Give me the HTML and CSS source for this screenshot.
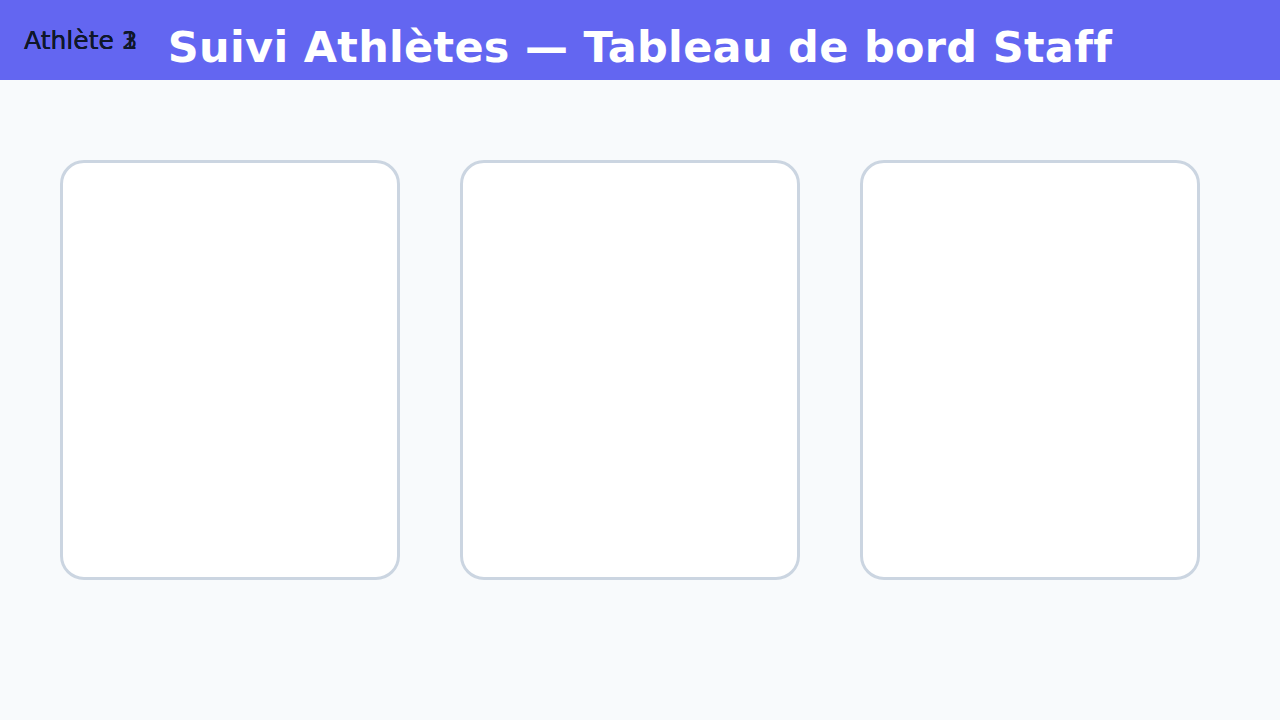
FILE: index.html
```html
<!DOCTYPE html>
<html lang="fr">
<head>
<meta charset="utf-8">
<title>Suivi Athlètes</title>
<link rel="stylesheet" href="styles.css">
</head>
<body>
<header class="topbar">
  <div class="labels">
    <span class="label">Athlète 1</span>
    <span class="label">Athlète 2</span>
    <span class="label">Athlète 3</span>
  </div>
  <h1 class="title">Suivi Athlètes — Tableau de bord Staff</h1>
</header>
<main class="board">
  <section class="card"></section>
  <section class="card"></section>
  <section class="card"></section>
</main>
</body>
</html>
```
FILE: styles.css
```css
* { box-sizing: border-box; }
html, body {
  margin: 0;
  padding: 0;
  background: #f8fafc;
  font-family: "DejaVu Sans", sans-serif;
  font-variant-ligatures: none;
  width: 1280px;
  height: 720px;
  overflow: hidden;
}
.topbar {
  position: relative;
  height: 80px;
  background: #6366f1;
  display: flex;
  justify-content: center;
  align-items: flex-start;
  padding-top: 22px;
}
.labels {
  position: absolute;
  left: 24px;
  top: 26px;
}
.label {
  position: absolute;
  left: 0;
  top: 0;
  white-space: nowrap;
  font-size: 25px;
  color: #0f172a;
}
.title {
  margin: 0;
  font-size: 43px;
  letter-spacing: 0.3px;
  font-weight: bold;
  color: #ffffff;
  line-height: normal;
}
.board {
  display: flex;
  gap: 60px;
  padding: 80px 60px 0 60px;
}
.card {
  width: 340px;
  height: 420px;
  background: #ffffff;
  border: 3px solid #cbd5e1;
  border-radius: 24px;
}
```
